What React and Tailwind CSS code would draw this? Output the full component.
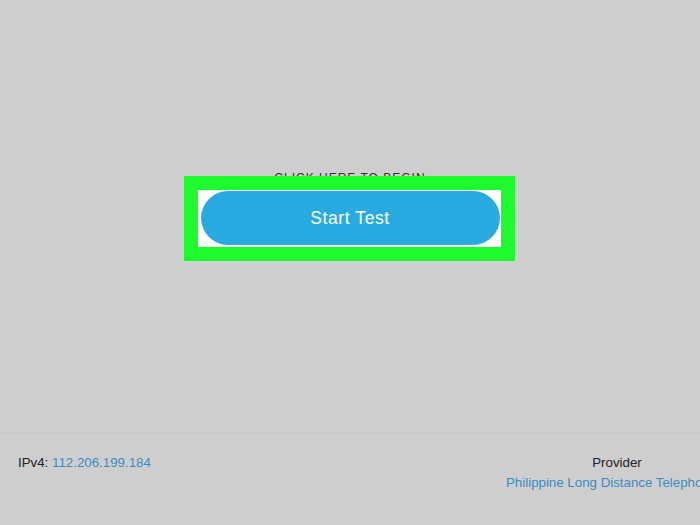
export default function App() {
  return (
    <div
      className="w-full h-[525px] overflow-hidden bg-[#cecece] flex flex-col"
      style={{ fontFamily: '"Liberation Sans", Arial, sans-serif' }}
    >
      <main className="h-[432px] flex flex-col items-center pt-[170px]">
        <p className="text-[12px] leading-4 tracking-[1px] text-[#333]">CLICK HERE TO BEGIN</p>
        <div className="relative mt-[5px]">
          <div className="absolute -left-[17px] -top-[15px] -right-[15px] -bottom-[16px] border-[14px] border-[#1ffa2f] bg-white" />
          <button className="relative w-[299px] h-[54px] rounded-full bg-[#29abe2] text-white text-[17.5px] tracking-[0.6px]">
            Start Test
          </button>
        </div>
      </main>
      <footer className="flex-1 border-t border-[#c9c9c9] flex justify-between pt-[20px] pl-[18px] text-[13.3px] leading-5 text-[#222]">
        <p>
          IPv4: <span className="text-[#3b8cc2]">112.206.199.184</span>
        </p>
        <div className="w-[222px] mr-[-28px] text-center whitespace-nowrap">
          <p>Provider</p>
          <p className="text-[#3b8cc2] text-left">Philippine Long Distance Telephone Company</p>
        </div>
      </footer>
    </div>
  );
}
